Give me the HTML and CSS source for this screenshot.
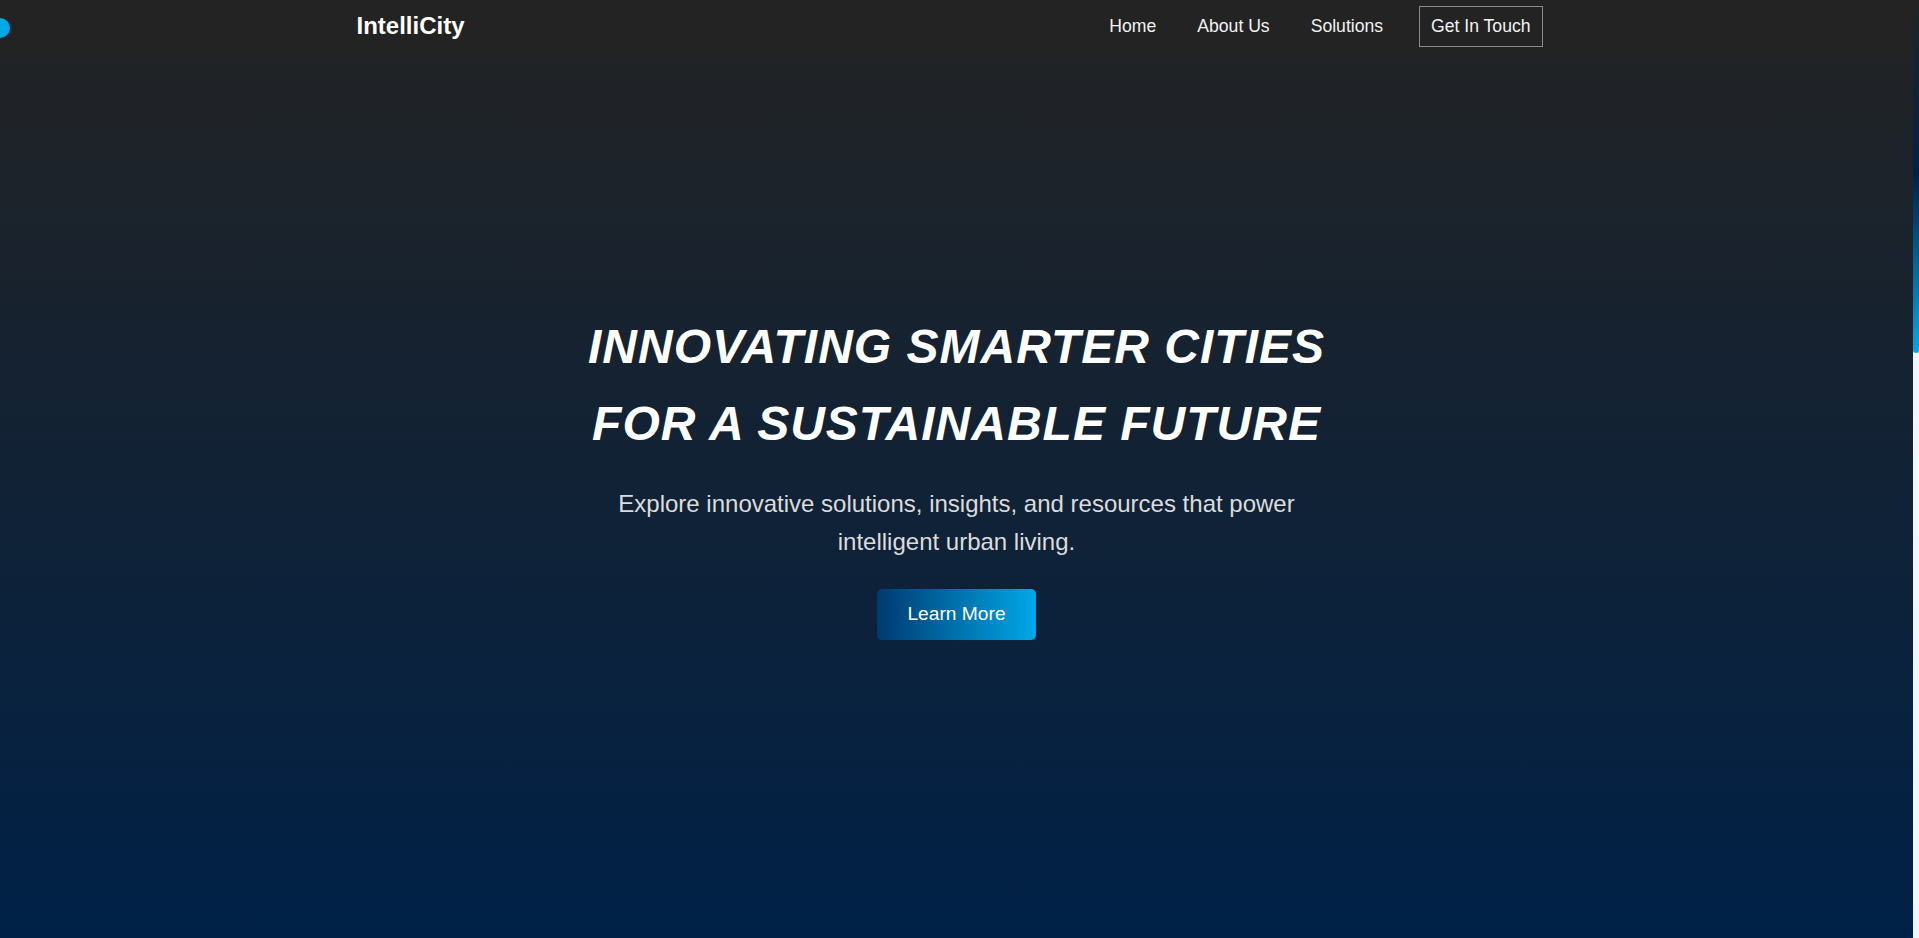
FILE: index.html
```html
<!DOCTYPE html>
<html lang="en">
<head>
<meta charset="UTF-8">
<title>IntelliCity</title>
<link rel="stylesheet" href="styles.css">
</head>
<body>
<div class="cursor-dot"></div>
<div class="scroll-track"><div class="scroll-thumb"></div></div>
<header class="site-header">
  <div class="container nav-bar">
    <a class="logo" href="#">IntelliCity</a>
    <nav>
      <ul class="nav-list">
        <li><a href="#">Home</a></li>
        <li><a href="#about">About Us</a></li>
        <li><a href="#solutions">Solutions</a></li>
        <li><a class="nav-cta" href="#contact">Get In Touch</a></li>
      </ul>
    </nav>
  </div>
</header>
<main>
  <section class="hero">
    <h1 class="hero-title">INNOVATING SMARTER CITIES<br>FOR A SUSTAINABLE FUTURE</h1>
    <p class="hero-text">Explore innovative solutions, insights, and resources that power intelligent urban living.</p>
    <a class="btn-primary" href="#about">Learn More</a>
  </section>
</main>
</body>
</html>
```
FILE: styles.css
```css
* {
  box-sizing: border-box;
}

html {
  background: #002147;
}

body {
  margin: 0;
  padding-right: 6px;
  font-family: "Liberation Sans", Arial, sans-serif;
  line-height: 1.6;
  color: #ffffff;
  background: #002147;
}

a {
  text-decoration: none;
  color: inherit;
}

.container {
  max-width: 1200px;
  margin: 0 auto;
}

.cursor-dot {
  position: fixed;
  left: -10px;
  top: 18px;
  width: 20px;
  height: 20px;
  border-radius: 50%;
  background: #00a8e8;
  z-index: 10;
}

.scroll-track {
  position: fixed;
  top: 0;
  right: 0;
  width: 6px;
  height: 100vh;
  background: #eef7fd;
  z-index: 20;
}

.scroll-thumb {
  height: 353px;
  border-radius: 0 0 4px 4px;
  background: linear-gradient(to bottom, #232323, #002147 50%, #00a8e8);
}

.site-header {
  background: #232323;
  height: 53px;
  margin-right: -6px;
  padding-right: 6px;
}

.nav-bar {
  height: 100%;
  display: flex;
  align-items: center;
  justify-content: space-between;
}

.logo {
  font-size: 24px;
  font-weight: 700;
  color: #ffffff;
}

.nav-list {
  list-style: none;
  margin: 0;
  padding: 0 14px 0 0;
  display: flex;
  align-items: center;
  gap: 25px;
}

.nav-list a {
  display: block;
  font-size: 17.6px;
  color: #f2f2f2;
  padding: 0 8px;
}

.nav-list a.nav-cta {
  border: 1px solid #8a8a8a;
  padding: 5.5px 11px;
  margin-left: 3px;
}

.hero {
  height: 885px;
  margin-right: -6px;
  padding-right: 6px;
  background: linear-gradient(to bottom, #212325, #002147);
  display: flex;
  flex-direction: column;
  align-items: center;
  justify-content: center;
  text-align: center;
  padding-bottom: 42px;
}

.hero-title {
  margin: 0;
  font-size: 48px;
  font-style: italic;
  font-weight: 700;
  line-height: 1.6;
  letter-spacing: 1px;
  color: #ffffff;
}

.hero-text {
  margin: 22px 0 28px;
  max-width: 700px;
  font-size: 24px;
  line-height: 1.6;
  color: #dcdcdc;
}

.btn-primary {
  display: inline-block;
  padding: 10px 30px;
  font-size: 19.2px;
  color: #ffffff;
  border-radius: 5px;
  background: linear-gradient(to right, #003a70, #00a8e8);
}
```
